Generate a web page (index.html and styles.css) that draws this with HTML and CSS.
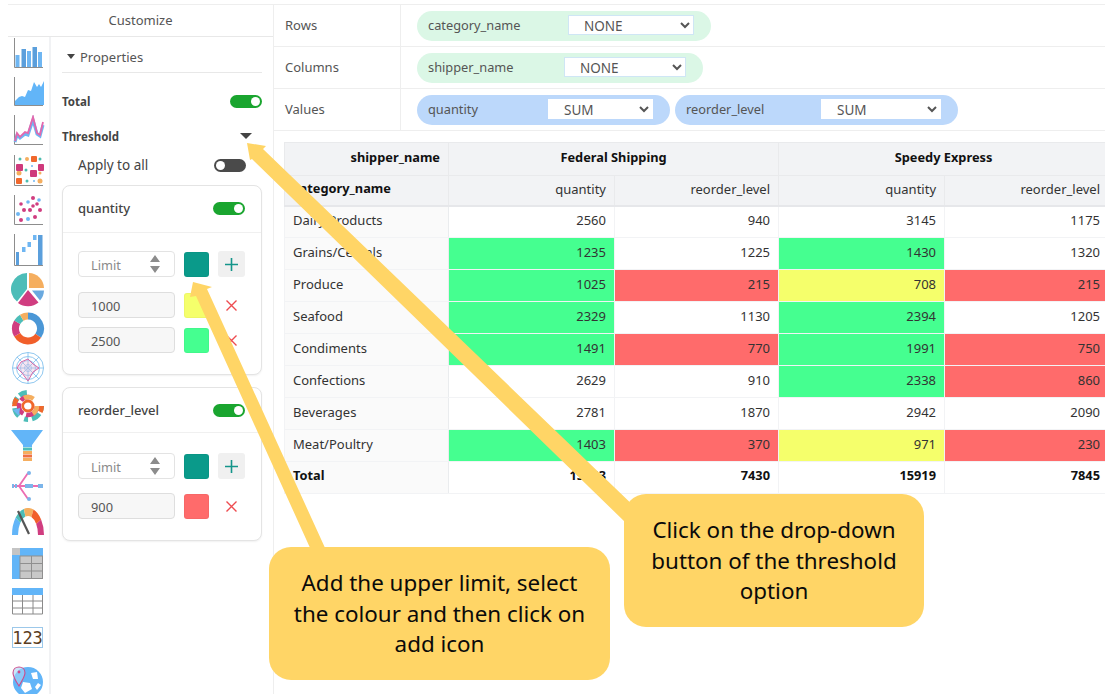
FILE: index.html
```html
<!DOCTYPE html>
<html lang="en">
<head>
<meta charset="utf-8">
<title>Customize</title>
<link rel="stylesheet" href="styles.css">
</head>
<body>
<div class="app">
  <aside class="side">
    <div class="side-head">Customize</div>
    <div class="side-body">
      <nav class="rail">
        <svg width="34" height="39" viewBox="0 0 34 39"><path d="M3.500 0V29.500H32" class="ax"/><rect x="4.500" y="17" width="4" height="12" fill="#6fb6f2"/><rect x="10.500" y="11" width="4.500" height="18" fill="#5b9fdc"/><rect x="16" y="13" width="4" height="16" fill="#6fb6f2"/><rect x="21.500" y="9" width="4.500" height="20" fill="#5b9fdc"/><rect x="27" y="14" width="4" height="15" fill="#6fb6f2"/></svg>
        <svg width="34" height="38" viewBox="0 0 34 38"><path d="M3.500 0V28.500H32" class="ax"/><path d="M4 28V24L8 20 11 19 14 20 17 13 20 14 23 5 26 10 28 7 30 10 33 4V28Z" fill="#62b5f8"/></svg>
        <svg width="34" height="40" viewBox="0 0 34 40"><path d="M3.500 0V29.500H32" class="ax"/><path d="M4 27 6 20 9 23 14 19 17 20 22 5 26 19 29 21 32 10" fill="none" stroke="#6fb6f2" stroke-width="3"/><path d="M4 26 6 18 9 22 14 17 17 18 22 2 26 18 29 20 32 7" fill="none" stroke="#e467ad" stroke-width="1.800"/></svg>
        <svg width="34" height="40" viewBox="0 0 34 40"><path d="M3.500 0V30.500H32" class="ax"/><g fill="#4dbdaf"><circle cx="9" cy="4" r="1.500"/><circle cx="29" cy="4" r="1.500"/><circle cx="15" cy="15" r="1.500"/><circle cx="16" cy="26" r="1.500"/></g><g fill="#f5ae5f"><circle cx="16" cy="4" r="2"/><circle cx="8" cy="18" r="2.500"/><circle cx="29" cy="26" r="2.500"/><circle cx="29" cy="18" r="1.500"/></g><g fill="#f0682c"><rect x="20" y="1" width="6" height="6" rx="1"/><rect x="5" y="23" width="6" height="6" rx="1"/></g><g fill="#cf3a7c"><rect x="5" y="9" width="7" height="7" rx="1"/><rect x="27" y="9" width="6" height="7" rx="1"/><rect x="19" y="15" width="7" height="7" rx="1"/></g><g fill="#6fb6f2"><circle cx="21" cy="11" r="1"/><circle cx="23" cy="26" r="1"/></g></svg>
        <svg width="34" height="39" viewBox="0 0 34 39"><path d="M3.500 0V29.500H32" class="ax"/><g fill="#d03d80"><circle cx="22" cy="3" r="2"/><circle cx="22" cy="11" r="1.800"/><circle cx="10" cy="9" r="1.800"/><circle cx="13" cy="15" r="2"/><circle cx="19" cy="15" r="2"/><circle cx="26" cy="9" r="1.800"/><circle cx="29" cy="15" r="2"/><circle cx="10" cy="25" r="2"/><circle cx="24" cy="22" r="2"/></g><g fill="#6fb6f2"><circle cx="17" cy="7" r="1.800"/><circle cx="28" cy="5" r="1.800"/><circle cx="7" cy="19" r="2"/><circle cx="17" cy="24" r="2"/></g></svg>
        <svg width="34" height="39" viewBox="0 0 34 39"><path d="M3.500 0V31.500H32" class="ax"/><g fill="#5b9fdc"><rect x="5" y="18" width="3" height="13"/><rect x="27" y="1" width="4.500" height="30"/></g><g fill="#6fb6f2"><rect x="11" y="13" width="3.500" height="5"/><rect x="16.500" y="8" width="3.500" height="5"/><rect x="22" y="1" width="3.500" height="5"/></g></svg>
        <svg width="34" height="39" viewBox="0 0 34 39"><path d="M16 0A16 16 0 0 0 6 28.500L16 16Z" fill="#4dbdb8"/><path d="M18 0A15.500 15.500 0 0 1 33 15L18 15Z" fill="#f5ae5f"/><path d="M33 17.500A15.500 15.500 0 0 1 29 27.500L21 17.500Z" fill="#6aa9df"/><path d="M17 17 27.500 29.500A16.500 16.500 0 0 1 7 30Z" fill="#d03d80"/></svg>
        <svg width="34" height="40" viewBox="0 0 34 40"><g fill="none" stroke-width="7"><path d="M17 4A12.500 12.500 0 0 1 27.200 23.700" stroke="#4b97d6"/><path d="M27.200 23.700A12.500 12.500 0 0 1 6.200 22.750" stroke="#f15f2b"/><path d="M6.200 22.750A12.500 12.500 0 0 1 6.200 10.250" stroke="#d03d80"/><path d="M6.200 10.250A12.500 12.500 0 0 1 10.750 5.700" stroke="#4dbdb8"/><path d="M10.750 5.700A12.500 12.500 0 0 1 17 4" stroke="#f5ae5f"/></g></svg>
        <svg width="34" height="38" viewBox="0 0 34 38"><g fill="none" stroke="#90c8f0" stroke-width="1"><circle cx="17" cy="16" r="15.500"/><circle cx="17" cy="16" r="11.500"/><circle cx="17" cy="16" r="7.500"/><circle cx="17" cy="16" r="3.500"/><path d="M17 0V32M1 16H33M6 5 28 27M28 5 6 27"/></g><path d="M17 7 22 12 28 16 22 20 17 29 11 21 6 16 10 10Z" fill="#e9b6d6" fill-opacity=".35" stroke="#d96aa8" stroke-width="1"/></svg>
        <svg width="34" height="40" viewBox="0 0 34 40"><g fill="none"><circle cx="17" cy="16" r="13.500" stroke="#4dbdb8" stroke-width="5" stroke-dasharray="5 3 9 4 4 6 9 4 7 3 8 23"/><circle cx="17" cy="16" r="13.500" stroke="#f0682c" stroke-width="5" stroke-dasharray="6 36 8 35"/><circle cx="17" cy="16" r="9" stroke="#d03d80" stroke-width="4.500" stroke-dasharray="16 3 12 3 10 13"/><circle cx="17" cy="16" r="9" stroke="#f5ae5f" stroke-width="4.500" stroke-dasharray="9 29 10 9"/><circle cx="17" cy="16" r="5" stroke="#f0682c" stroke-width="3"/></g><circle cx="16" cy="16" r="2.800" fill="#fff"/><path d="M2 20 9 18 8 26Z" fill="#6fb6f2"/></svg>
        <svg width="34" height="40" viewBox="0 0 34 40"><path d="M0 0H32L21 15V17H12V15Z" fill="#62b5f8"/><rect x="12" y="17.500" width="9" height="3" fill="#4dbdb8"/><rect x="12" y="21" width="9" height="3" fill="#f5ae5f"/><rect x="12" y="24.500" width="9" height="3" fill="#ef7044"/><rect x="12" y="28" width="9" height="3" fill="#f5ae5f"/></svg>
        <svg width="34" height="38" viewBox="0 0 34 38"><path d="M3 16H31M17 3 8 16 17 29" fill="none" stroke="#ec6db2" stroke-width="1.800"/><g fill="#7cb5ea"><circle cx="18" cy="3" r="2"/><circle cx="18" cy="29" r="2"/><rect x="1" y="14" width="2" height="4"/><rect x="4" y="14" width="2" height="4"/><rect x="14" y="14" width="8" height="4"/><rect x="27" y="14" width="5" height="4"/></g></svg>
        <svg width="34" height="40" viewBox="0 0 34 40"><g transform="translate(1 0)"><path d="M0 27A16 27 0 0 1 3.700 9.600L8.300 14.800A10 19 0 0 0 6 27Z" fill="#62b5f8"/><path d="M3.700 9.600A16 27 0 0 1 11.900 .9L13.400 8.600A10 19 0 0 0 8.300 14.800Z" fill="#4dbdb8"/><path d="M11.900 .9A16 27 0 0 1 21.500 1.600L19.400 9.100A10 19 0 0 0 13.400 8.600Z" fill="#f5ae5f"/><path d="M21.500 1.600A16 27 0 0 1 29.100 11.500L24.200 16.100A10 19 0 0 0 19.400 9.100Z" fill="#f15f2b"/><path d="M29.100 11.500A16 27 0 0 1 32 27H26A10 19 0 0 0 24.200 16.100Z" fill="#d03d80"/><path d="M6 3 17 26" stroke="#555" stroke-width="2.200" fill="none"/></g></svg>
        <svg width="34" height="40" viewBox="0 0 34 40"><rect x="1" y="0" width="31" height="31" fill="#62b5f8"/><rect x="1" y="0" width="8" height="7" fill="#c4c4c4"/><rect x="9" y="8" width="23" height="23" fill="#c8c8c8"/><path d="M9 8H32M9 15.500H32M9 23H32M9 30.500H32M9 8V31M20.500 8V31M31.500 8V31" stroke="#8f8f8f" stroke-width="1" fill="none"/></svg>
        <svg width="34" height="39" viewBox="0 0 34 39"><rect x="1" y="0" width="31" height="7" fill="#62b5f8"/><path d="M1.500 7V26H31.500V7M1 13H32M1 20H32M11.500 7V26M22 7V26" fill="none" stroke="#8a8a8a" stroke-width="1"/></svg>
        <svg width="34" height="38" viewBox="0 0 34 38"><rect x="1.500" y="0.500" width="30" height="20" fill="#fff" stroke="#9cc8ea"/><text x="16.500" y="17" text-anchor="middle" class="num-text">123</text></svg>
        <svg width="34" height="30" viewBox="0 0 34 30"><circle cx="17" cy="17" r="15" fill="#62b5f8"/><path d="M20 8 26 7 27 14 22 14ZM12 17 19 18 21 24 14 28 10 23ZM27 18 30 20 26 25 24 22Z" fill="#fff"/><path d="M8 21C4 15 2 11 2 8 2 4 5 2 8 2 11 2 14 4 14 8 14 11 11 16 8 21Z" fill="#a9d5f7" fill-opacity=".6" stroke="#cf4a8a" stroke-width="1.100"/><circle cx="8" cy="7" r="1.400" fill="#cf4a8a"/></svg>
      </nav>
      <div class="props">
        <div class="props-title"><span class="caret-small"></span>Properties</div>
        <div class="opt opt-total"><b>Total</b><span class="toggle on"></span></div>
        <div class="opt opt-threshold"><b>Threshold</b><span class="caret"></span></div>
        <div class="opt opt-apply"><span>Apply to all</span><span class="toggle off"></span></div>

        <section class="card">
          <header class="card-head"><span>quantity</span><span class="toggle on"></span></header>
          <div class="card-body">
            <div class="limit">
              <div class="field"><input class="input" placeholder="Limit" aria-label="Limit"><svg class="spin" width="10" height="18" viewBox="0 0 10 18"><path d="M5 0 10 7H0ZM0 11H10L5 18Z" fill="#8c8c8c"/></svg></div>
              <span class="swatch teal"></span>
              <span class="add"><svg width="13" height="13" viewBox="0 0 13 13"><path d="M6.500 0V13M0 6.500H13" stroke="#14958a" stroke-width="1.600"/></svg></span>
            </div>
            <div class="limit gap1">
              <div class="field"><input class="input filled" value="1000" aria-label="Limit value"></div>
              <span class="swatch yellow"></span>
              <span class="del"><svg width="11" height="11" viewBox="0 0 11 11"><path d="M.5.5 10.500 10.500M10.500.5.500 10.500" stroke="#ee4b4f" stroke-width="1.400"/></svg></span>
            </div>
            <div class="limit gap2">
              <div class="field"><input class="input filled" value="2500" aria-label="Limit value"></div>
              <span class="swatch green"></span>
              <span class="del"><svg width="11" height="11" viewBox="0 0 11 11"><path d="M.5.5 10.500 10.500M10.500.5.500 10.500" stroke="#ee4b4f" stroke-width="1.400"/></svg></span>
            </div>
          </div>
        </section>

        <section class="card card-two">
          <header class="card-head"><span>reorder_level</span><span class="toggle on"></span></header>
          <div class="card-body">
            <div class="limit">
              <div class="field"><input class="input" placeholder="Limit" aria-label="Limit"><svg class="spin" width="10" height="18" viewBox="0 0 10 18"><path d="M5 0 10 7H0ZM0 11H10L5 18Z" fill="#8c8c8c"/></svg></div>
              <span class="swatch teal"></span>
              <span class="add"><svg width="13" height="13" viewBox="0 0 13 13"><path d="M6.500 0V13M0 6.500H13" stroke="#14958a" stroke-width="1.600"/></svg></span>
            </div>
            <div class="limit gap3">
              <div class="field"><input class="input filled" value="900" aria-label="Limit value"></div>
              <span class="swatch red"></span>
              <span class="del"><svg width="11" height="11" viewBox="0 0 11 11"><path d="M.5.5 10.500 10.500M10.500.5.500 10.500" stroke="#ee4b4f" stroke-width="1.400"/></svg></span>
            </div>
          </div>
        </section>
      </div>
    </div>
  </aside>

  <main class="main">
    <div class="shelf">
      <div class="shelf-label">Rows</div>
      <div class="shelf-pills">
        <div class="pill mint p-cat"><span>category_name</span><select class="sel s-cat"><option>NONE</option></select></div>
      </div>
    </div>
    <div class="shelf">
      <div class="shelf-label">Columns</div>
      <div class="shelf-pills">
        <div class="pill mint p-ship"><span>shipper_name</span><select class="sel s-ship"><option>NONE</option></select></div>
      </div>
    </div>
    <div class="shelf">
      <div class="shelf-label">Values</div>
      <div class="shelf-pills">
        <div class="pill blue p-qty"><span>quantity</span><select class="sel s-qty"><option>SUM</option></select></div>
        <div class="pill blue p-reo"><span>reorder_level</span><select class="sel s-reo"><option>SUM</option></select></div>
      </div>
    </div>

    <div class="table-wrap">
      <table class="pivot">
        <colgroup><col class="c0"><col class="c1"><col class="c2"><col class="c3"><col class="c4"></colgroup>
        <thead>
          <tr class="h1"><th class="corner">shipper_name</th><th colspan="2" class="group">Federal Shipping</th><th colspan="2" class="group">Speedy Express</th></tr>
          <tr class="h2"><th class="cat">category_name</th><td>quantity</td><td>reorder_level</td><td>quantity</td><td>reorder_level</td></tr>
        </thead>
        <tbody>
          <tr><th>Dairy Products</th><td>2560</td><td>940</td><td>3145</td><td>1175</td></tr>
          <tr><th>Grains/Cereals</th><td class="g">1235</td><td>1225</td><td class="g">1430</td><td>1320</td></tr>
          <tr><th>Produce</th><td class="g">1025</td><td class="r">215</td><td class="y">708</td><td class="r">215</td></tr>
          <tr><th>Seafood</th><td class="g">2329</td><td>1130</td><td class="g">2394</td><td>1205</td></tr>
          <tr><th>Condiments</th><td class="g">1491</td><td class="r">770</td><td class="g">1991</td><td class="r">750</td></tr>
          <tr><th>Confections</th><td>2629</td><td>910</td><td class="g">2338</td><td class="r">860</td></tr>
          <tr><th>Beverages</th><td>2781</td><td>1870</td><td>2942</td><td>2090</td></tr>
          <tr><th>Meat/Poultry</th><td class="g">1403</td><td class="r">370</td><td class="y">971</td><td class="r">230</td></tr>
          <tr class="total"><th>Total</th><td>15453</td><td>7430</td><td>15919</td><td>7845</td></tr>
        </tbody>
      </table>
    </div>
  </main>
</div>

<svg class="arrows" width="1105" height="694" viewBox="0 0 1105 694" aria-hidden="true">
  <path d="M247 143 266 146 263 149 640 512 625 522 252 159 250 160Z"/>
  <path d="M193 282 212 287 207 289 326 550 311 550 196 296 190 297Z"/>
</svg>
<div class="callout callout-a">Add the upper limit, select the colour and then click on add icon</div>
<div class="callout callout-b">Click on the drop-down button of the threshold option</div>
</body>
</html>
```

FILE: styles.css
```css
* { box-sizing: border-box; }
html, body { margin: 0; height: 100%; }
body {
  width: 1105px;
  height: 694px;
  overflow: hidden;
  position: relative;
  background: #fff;
  color: #444;
  font-family: "Noto Sans", "Open Sans", sans-serif;
  font-size: 13px;
}

.app {
  display: flex;
  height: 694px;
  padding: 4px 0 0 8px;
}

.side {
  width: 266px;
  flex: none;
  border-top: 1px solid #eee;
  border-right: 1px solid #eee;
  display: flex;
  flex-direction: column;
}
.side-head {
  height: 32px;
  flex: none;
  display: flex;
  align-items: center;
  justify-content: center;
  padding-bottom: 2px;
  border-bottom: 1px solid #e8e8e8;
  font-size: 13px;
  color: #555;
}
.side-body { display: flex; flex: 1; min-height: 0; }

.rail {
  width: 43px;
  flex: none;
  padding: 1px 0 0 3px;
  border-right: 2px solid #f1f2f4;
  display: flex;
  flex-direction: column;
  overflow: hidden;
}
.rail svg { flex: none; display: block; }
.ax { fill: none; stroke: #8d8d8d; stroke-width: 1; }
.num-text { font-family: "DejaVu Sans Mono", monospace; font-size: 17px; fill: #5a3d22; }

.props { flex: 1; padding: 0 11px; min-width: 0; }
.props-title {
  height: 36px;
  display: flex;
  align-items: center;
  padding-top: 4px;
  border-bottom: 1px solid #e8e8e8;
  color: #555;
  font-size: 13px;
}
.caret-small {
  width: 0; height: 0;
  margin: 0 5px 0 5px;
  border-left: 4px solid transparent;
  border-right: 4px solid transparent;
  border-top: 5px solid #444;
}
.opt {
  height: 22px;
  display: flex;
  align-items: center;
  justify-content: space-between;
  color: #444;
}
.opt b { font-size: 11.500px; font-weight: 700; }
.opt-total { margin-top: 17px; }
.opt-threshold { margin-top: 13px; padding-right: 10px; }
.opt-apply { margin-top: 7px; padding: 0 16px 0 16px; font-size: 13.500px; }
.caret {
  width: 0; height: 0;
  border-left: 6px solid transparent;
  border-right: 6px solid transparent;
  border-top: 6px solid #444;
}

.toggle {
  width: 32px;
  height: 13px;
  border-radius: 7px;
  display: flex;
  align-items: center;
  padding: 0 2px;
  flex: none;
}
.toggle::after {
  content: "";
  width: 9px;
  height: 9px;
  border-radius: 50%;
  background: #fff;
}
.toggle.on { background: #1aa52f; justify-content: flex-end; }
.toggle.off { background: #4a4a4a; justify-content: flex-start; }

.card {
  margin-top: 9px;
  border: 1px solid #e4e4e4;
  border-radius: 8px;
  box-shadow: 0 1px 2px rgba(0,0,0,.06);
  background: #fff;
  height: 190px;
}
.card-two { margin-top: 12px; height: 154px; }
.card-head {
  height: 47px;
  padding: 0 16px 2px 15px;
  display: flex;
  align-items: center;
  justify-content: space-between;
  border-bottom: 1px solid #f0f0f0;
  font-size: 13px;
  font-weight: 500;
  color: #444;
}
.card-two .card-head { height: 45px; padding-bottom: 0; }
.card-body { padding: 18px 15px 0; }
.card-two .card-body { padding-top: 20px; }
.limit { display: flex; align-items: center; gap: 9px; height: 26px; }
.gap1 { margin-top: 15px; }
.gap2 { margin-top: 9px; }
.gap3 { margin-top: 14px; }
.field {
  width: 97px;
  height: 26px;
  flex: none;
  display: flex;
  align-items: center;
  border: 1px solid #e3e3e3;
  border-radius: 4px;
  padding-right: 14px;
  background: #fff;
}
.field:has(.filled) { background: #f7f7f7; border-color: #dedede; padding-right: 0; }
.input {
  width: 100%;
  min-width: 0;
  height: 100%;
  border: 0;
  background: transparent;
  padding: 2px 0 0 12px;
  font: 12.800px "Noto Sans", "Open Sans", sans-serif;
  color: #555;
  outline: 0;
}
.input::placeholder { color: #8a8a8a; opacity: 1; }
.spin { flex: none; }
.swatch { width: 25px; height: 25px; border-radius: 3px; flex: none; border: 1px solid rgba(0,0,0,.03); }
.teal { background: #0a9a8a; }
.yellow { background: #f5ff6b; }
.green { background: #45ff90; }
.red { background: #ff6b6b; }
.add {
  width: 27px; height: 26px;
  flex: none;
  display: flex; align-items: center; justify-content: center;
  background: #f0f0f0;
  border-radius: 3px;
}
.del {
  width: 27px; height: 26px;
  flex: none;
  display: flex; align-items: center; justify-content: center;
}

.main { flex: 1; min-width: 0; border-top: 1px solid #eee; }
.shelf {
  height: 42px;
  display: flex;
  border-bottom: 1px solid #eee;
  color: #555;
}
.shelf-label {
  width: 127px;
  flex: none;
  padding: 0 0 2px 11px;
  display: flex;
  align-items: center;
  border-right: 1px solid #eee;
  font-size: 13px;
}
.shelf-pills { display: flex; align-items: center; gap: 5px; padding-left: 16px; }
.pill {
  height: 30px;
  border-radius: 15px;
  display: flex;
  align-items: center;
  justify-content: space-between;
  padding: 0 17px 0 11px;
  font-size: 12.800px;
  color: #555;
}
.pill span { padding-bottom: 1px; }
.mint { background: #dbf7e6; }
.blue { background: #bcd8fb; }
.p-cat { width: 294px; }
.p-ship { width: 286px; }
.p-qty { width: 253px; }
.p-reo { width: 283px; }
.sel {
  height: 20px;
  margin-bottom: 2px;
  border: 1px solid #cfe6f5;
  border-radius: 0;
  background: #fff;
  padding: 0 0 2px 11px;
  font: 13.500px "Noto Sans", "Open Sans", sans-serif;
  color: #555;
  outline: 0;
}
.blue .sel { border-color: #fff; }
.s-cat { width: 126px; }
.s-ship { width: 122px; }
.s-qty { width: 105px; }
.s-reo { width: 120px; }

.table-wrap { margin: 11px 0 0 10px; overflow: hidden; }
.pivot {
  table-layout: fixed;
  border-collapse: collapse;
  width: 824px;
  font-size: 13px;
  color: #333;
}
.c0 { width: 164px; }
.c1 { width: 166px; }
.c2 { width: 164px; }
.c3 { width: 166px; }
.c4 { width: 164px; }
.pivot th, .pivot td {
  padding: 0 8px 3px;
  border: 1px solid #f2f3f5;
  font-weight: 400;
  text-align: right;
  height: 32px;
  white-space: nowrap;
  overflow: hidden;
}
.pivot tbody th { text-align: left; background: #fafafa; border-right-color: #eaecee; }
.pivot thead th, .pivot thead td { background: #f2f3f5; border-color: #e9eaec; }
.pivot .h1 th { height: 33px; padding-bottom: 5px; font-weight: 700; color: #111; font-size: 12.800px; }
.pivot .h2 th, .pivot .h2 td { height: 30px; border-bottom: 2px solid #e6e7ea; }
.pivot .group { text-align: center; }
.pivot .cat { padding-bottom: 5px; text-align: left; font-weight: 700; color: #111; font-size: 12.800px; }
.pivot .total th, .pivot .total td { padding-bottom: 5px; font-weight: 700; color: #111; font-size: 12.800px; }
.pivot .g { background: #45ff90; }
.pivot .r { background: #ff6b6b; }
.pivot .y { background: #f5ff6b; }

.arrows { position: absolute; left: 0; top: 0; pointer-events: none; }
.arrows path { fill: #ffd566; }
.callout {
  position: absolute;
  display: flex;
  align-items: center;
  justify-content: center;
  text-align: center;
  height: 133px;
  padding-top: 1px;
  border-radius: 22px;
  background: #ffd566;
  color: #0a0a0a;
  font-size: 22.400px;
  line-height: 30.500px;
}
.callout-a { left: 269px; top: 547px; width: 341px; padding-left: 20px; padding-right: 20px; }
.callout-b { left: 624px; top: 494px; width: 300px; padding-left: 20px; padding-right: 20px; }
```
